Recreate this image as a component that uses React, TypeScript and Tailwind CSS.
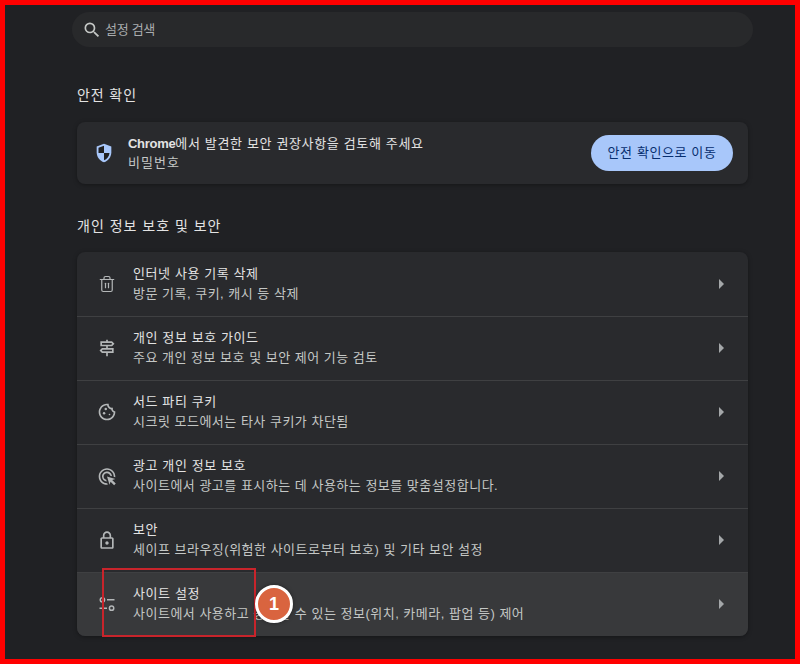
import { Trash2 } from "lucide-react";
import { MdOutlineAdsClick, MdOutlineCookie, MdOutlineLock, MdOutlineSignpost, MdSearch } from "react-icons/md";
import type { ReactNode } from "react";

const font = "font-['Liberation_Sans','Noto_Sans_CJK_KR',sans-serif]";

function ShieldIcon() {
  return (
    <svg viewBox="0 0 24 24" className="h-[22px] w-[22px]">
      <path d="M12 2 4 5v6.1c0 5 3.4 9.7 8 10.9 4.6-1.2 8-5.9 8-10.9V5l-8-3Z" fill="#a8c7fa" />
      <path d="M12 4.1 6 6.4V12h6V4.1ZM12 12v7.9c3.2-1 5.6-4.3 6-7.9h-6Z" fill="#1f2023" />
    </svg>
  );
}

function SlidersIcon() {
  return (
    <svg viewBox="0 0 24 24" className="h-5 w-5" fill="none" stroke="#b4b7b8" strokeWidth="1.8">
      <circle cx="6.5" cy="7" r="2.6" />
      <path d="M12 7h9" />
      <circle cx="17.5" cy="17" r="2.6" />
      <path d="M3 17h9" />
    </svg>
  );
}

const rows: { icon: ReactNode; title: string; desc: string; active?: boolean }[] = [
  {
    icon: <Trash2 className="h-[18px] w-[18px]" strokeWidth={1.6} />,
    title: "인터넷 사용 기록 삭제",
    desc: "방문 기록, 쿠키, 캐시 등 삭제",
  },
  {
    icon: <MdOutlineSignpost className="h-[20px] w-[20px]" />,
    title: "개인 정보 보호 가이드",
    desc: "주요 개인 정보 보호 및 보안 제어 기능 검토",
  },
  {
    icon: <MdOutlineCookie className="h-[20px] w-[20px]" />,
    title: "서드 파티 쿠키",
    desc: "시크릿 모드에서는 타사 쿠키가 차단됨",
  },
  {
    icon: <MdOutlineAdsClick className="h-[21px] w-[21px]" />,
    title: "광고 개인 정보 보호",
    desc: "사이트에서 광고를 표시하는 데 사용하는 정보를 맞춤설정합니다.",
  },
  {
    icon: <MdOutlineLock className="h-[21px] w-[21px]" />,
    title: "보안",
    desc: "세이프 브라우징(위험한 사이트로부터 보호) 및 기타 보안 설정",
  },
  {
    icon: <SlidersIcon />,
    title: "사이트 설정",
    desc: "사이트에서 사용하고 공유할 수 있는 정보(위치, 카메라, 팝업 등) 제어",
    active: true,
  },
];

function SettingsRow({ icon, title, desc, active }: (typeof rows)[number]) {
  return (
    <div
      className={`flex h-[64px] items-center border-t border-[#3f4042] pb-px pl-[20px] pr-[24px] first:border-t-0 first:pb-0 ${
        active ? "bg-[#38393b]" : ""
      }`}
    >
      <div className="flex w-[20px] justify-center text-[#b4b7b8]">{icon}</div>
      <div className="ml-[16px] flex-1">
        <div className="text-[13px] leading-[20px] tracking-[0.6px] text-[#e3e3e3]">{title}</div>
        <div className="text-[13px] leading-[20px] tracking-[0.5px] text-[#c4c7c5]">{desc}</div>
      </div>
      <div className="h-0 w-0 border-y-[5px] border-l-[5px] border-y-transparent border-l-[#a4a7a9]" />
    </div>
  );
}

export default function App() {
  return (
    <div className={`relative h-[664px] w-[800px] overflow-hidden border-[5px] border-[#ff0000] bg-[#202124] ${font}`}>
      <div className="ml-[67px] mt-[7px] flex h-[35px] w-[681px] items-center rounded-full bg-[#28292b] pl-[10px]">
        <MdSearch className="h-[20px] w-[20px] text-[#c4c7c5]" />
        <span className="ml-[3px] text-[13px] tracking-[-0.3px] text-[#a9acae]">설정 검색</span>
      </div>

      <h2 className="ml-[72px] mt-[38px] text-[14px] font-normal leading-[20px] tracking-[0.9px] text-[#e3e3e3]">
        안전 확인
      </h2>
      <div className="ml-[72px] mt-[17px] flex h-[62px] w-[671px] items-center rounded-lg bg-[#292a2d] pl-[16px] pr-[15px] shadow-[0_1px_4px_rgba(0,0,0,0.35)]">
        <ShieldIcon />
        <div className="ml-[13px] flex-1">
          <div className="text-[13px] leading-[19px] text-[#e3e3e3]">
            <span className="font-bold tracking-[-0.3px]">Chrome</span>
            <span className="tracking-[0.65px]">에서 발견한 보안 권장사항을 검토해 주세요</span>
          </div>
          <div className="text-[13px] leading-[19px] tracking-[1px] text-[#c4c7c5]">비밀번호</div>
        </div>
        <button
          type="button"
          className="h-[36px] w-[142px] rounded-full bg-[#a8c7fa] text-center text-[13px] tracking-[0.6px] text-[#062e6f]"
        >
          안전 확인으로 이동
        </button>
      </div>

      <h2 className="ml-[72px] mt-[32px] text-[14px] font-normal leading-[20px] tracking-[1px] text-[#e3e3e3]">
        개인 정보 보호 및 보안
      </h2>
      <div className="ml-[72px] mt-[16px] w-[671px] overflow-hidden rounded-lg bg-[#292a2d] shadow-[0_1px_4px_rgba(0,0,0,0.35)]">
        {rows.map((row) => (
          <SettingsRow key={row.title} {...row} />
        ))}
      </div>

      {/* annotation drawn over the screenshot */}
      <div className="absolute left-[97px] top-[563px] h-[69px] w-[154px] border-2 border-[#c8242b]" />
      <div className="absolute left-[250px] top-[580px] flex h-[38px] w-[38px] items-center justify-center rounded-full border-[3px] border-white bg-[#d9643f] text-[18px] font-bold text-white shadow-[0_0_4px_rgba(0,0,0,0.4)]">
        1
      </div>
    </div>
  );
}
